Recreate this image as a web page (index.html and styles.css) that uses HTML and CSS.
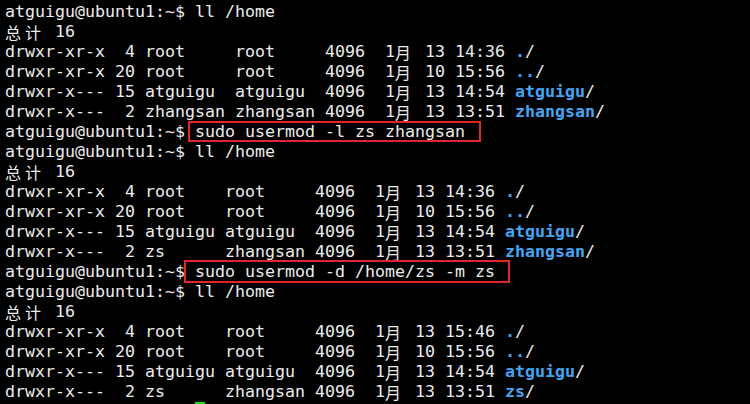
FILE: index.html
```html
<!DOCTYPE html>
<html>
<head>
<meta charset="utf-8">
<link rel="stylesheet" href="styles.css">
</head>
<body>
<div class="term">
<div class="line">atguigu@ubuntu1:~$ ll /home</div>
<div class="line"><span class="w">总</span><span class="w">计</span> 16</div>
<div class="line">drwxr-xr-x  4 root     root     4096  1<span class="w">月</span> 13 14:36 <span class="dir">.</span>/</div>
<div class="line">drwxr-xr-x 20 root     root     4096  1<span class="w">月</span> 10 15:56 <span class="dir">..</span>/</div>
<div class="line">drwxr-x--- 15 atguigu  atguigu  4096  1<span class="w">月</span> 13 14:54 <span class="dir">atguigu</span>/</div>
<div class="line">drwxr-x---  2 zhangsan zhangsan 4096  1<span class="w">月</span> 13 13:51 <span class="dir">zhangsan</span>/</div>
<div class="line">atguigu@ubuntu1:~$ <span class="hl hl-a">sudo usermod -l zs zhangsan</span></div>
<div class="line">atguigu@ubuntu1:~$ ll /home</div>
<div class="line"><span class="w">总</span><span class="w">计</span> 16</div>
<div class="line">drwxr-xr-x  4 root    root     4096  1<span class="w">月</span> 13 14:36 <span class="dir">.</span>/</div>
<div class="line">drwxr-xr-x 20 root    root     4096  1<span class="w">月</span> 10 15:56 <span class="dir">..</span>/</div>
<div class="line">drwxr-x--- 15 atguigu atguigu  4096  1<span class="w">月</span> 13 14:54 <span class="dir">atguigu</span>/</div>
<div class="line">drwxr-x---  2 zs      zhangsan 4096  1<span class="w">月</span> 13 13:51 <span class="dir">zhangsan</span>/</div>
<div class="line">atguigu@ubuntu1:~$ <span class="hl hl-b">sudo usermod -d /home/zs -m zs</span></div>
<div class="line">atguigu@ubuntu1:~$ ll /home</div>
<div class="line"><span class="w">总</span><span class="w">计</span> 16</div>
<div class="line">drwxr-xr-x  4 root    root     4096  1<span class="w">月</span> 13 15:46 <span class="dir">.</span>/</div>
<div class="line">drwxr-xr-x 20 root    root     4096  1<span class="w">月</span> 10 15:56 <span class="dir">..</span>/</div>
<div class="line">drwxr-x--- 15 atguigu atguigu  4096  1<span class="w">月</span> 13 14:54 <span class="dir">atguigu</span>/</div>
<div class="line">drwxr-x---  2 zs      zhangsan 4096  1<span class="w">月</span> 13 13:51 <span class="dir">zs</span>/</div>
<div class="line">                   <span class="cursor"> </span></div>
</div>
</body>
</html>
```

FILE: styles.css
```css
html, body {
  margin: 0;
  padding: 0;
  background: #000;
  height: 404px;
  overflow: hidden;
}
.term {
  padding: 2px 0 0 5px;
  font-family: "DejaVu Sans Mono", "Noto Sans CJK SC", monospace;
  font-size: 16.61px;
  color: #ececec;
}
.line {
  height: 20px;
  line-height: 20px;
  white-space: pre;
}
.w {
  display: inline-block;
  width: 20px;
  font-family: "Noto Sans CJK SC", sans-serif;
  font-size: 16px;
  line-height: 20px;
  vertical-align: top;
}
.dir {
  color: #44a6f2;
  font-weight: bold;
}
.hl {
  position: relative;
}
.hl::after {
  content: "";
  position: absolute;
  border: 2px solid #e3242b;
}
.hl-a::after {
  left: -7px;
  right: -16px;
  top: -1px;
  bottom: -1px;
}
.hl-b::after {
  left: -11px;
  right: -15px;
  top: -2px;
  bottom: -2px;
}
.cursor {
  display: inline-block;
  width: 10px;
  height: 20px;
  vertical-align: top;
  box-shadow: inset 0 3px 0 #14e020;
}
```
